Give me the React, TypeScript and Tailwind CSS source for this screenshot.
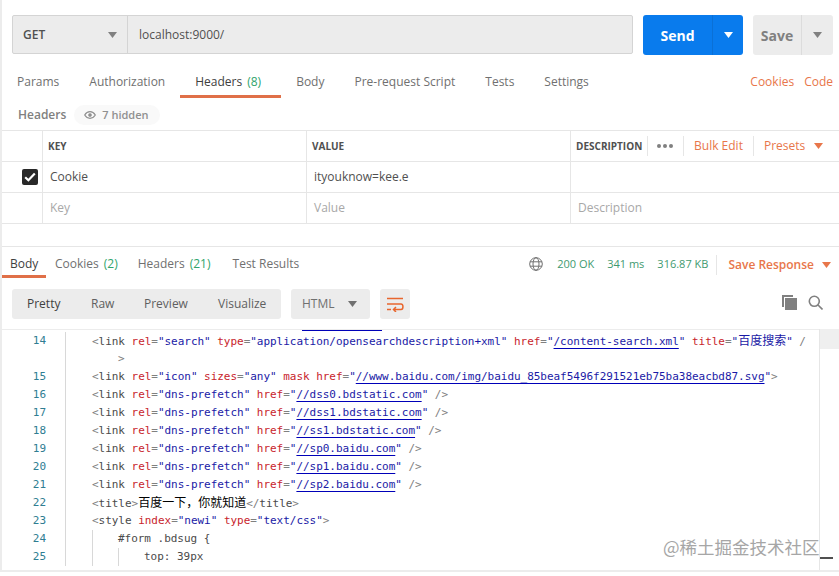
import React from 'react';

const ORANGE = 'text-[#e8764a]';

const Caret: React.FC<{ className?: string }> = ({ className }) => (
  <svg width="9" height="6" viewBox="0 0 9 6" className={className} fill="currentColor">
    <path d="M0 0h9L4.500 6z" />
  </svg>
);

const Tag: React.FC<{ children: React.ReactNode }> = ({ children }) => <span className="text-[#4a4a4a]">{children}</span>;
const Punct: React.FC<{ children: React.ReactNode }> = ({ children }) => <span className="text-[#808080]">{children}</span>;
const Attr: React.FC<{ children: React.ReactNode }> = ({ children }) => <span className="text-[#c8242c]">{children}</span>;
const Val: React.FC<{ children: React.ReactNode }> = ({ children }) => <span className="text-[#1a1aa6]">{children}</span>;
const Url: React.FC<{ children: React.ReactNode }> = ({ children }) => (
  <span className="text-[#1a1aa6] underline decoration-[#0000b8] underline-offset-[3px]">{children}</span>
);
const Cjk: React.FC<{ children: React.ReactNode; className?: string }> = ({ children, className }) => (
  <span className={`text-[12px] tracking-normal ${className ?? ''}`}>{children}</span>
);

const Guide = () => <span className="inline-block w-[26px] h-[18px] shrink-0 border-l border-[#d8d8d8]" />;

const DnsLine: React.FC<{ host: string }> = ({ host }) => (
  <>
    <Punct>&lt;</Punct><Tag>link</Tag> <Attr>rel</Attr><Punct>=</Punct><Val>"dns-prefetch"</Val> <Attr>href</Attr><Punct>=</Punct><Val>"</Val>
    <Url>{host}</Url><Val>"</Val> <Punct>/&gt;</Punct>
  </>
);

const CodeLine: React.FC<{ n?: number; guides?: number; children: React.ReactNode; pad?: string }> = ({ n, guides = 0, children, pad }) => (
  <div className="flex h-[18px] leading-[18px]">
    <div className="w-[45px] shrink-0 text-right text-[#2f7d92] pr-[1px]">{n}</div>
    <div className="w-[19px] shrink-0 border-r border-[#d8d8d8] mr-[26px]" />
    {Array.from({ length: guides }).map((_, i) => (
      <Guide key={i} />
    ))}
    <div className={`whitespace-pre ${pad ?? ''}`}>{children}</div>
  </div>
);

const App: React.FC = () => {
  const requestTabs = [
    { label: 'Params' },
    { label: 'Authorization' },
    { label: 'Headers', count: '(8)', active: true },
    { label: 'Body' },
    { label: 'Pre-request Script' },
    { label: 'Tests' },
    { label: 'Settings' },
  ];

  return (
    <div className="w-[839px] h-[576px] bg-white overflow-hidden relative font-['Open_Sans',sans-serif] text-[12px] text-[#505050]">
      <div className="h-[572px] border-l-2 border-b-2 border-[#ececec] flex flex-col">
        {/* url bar */}
        <div className="flex pt-[15px] pl-[10px] pr-[6px] h-[39px] box-content">
          <div className="flex h-[39px] w-[621px] bg-[#ececec] border border-[#d4d4d4] rounded-[2px]">
            <div className="w-[115px] flex items-center justify-between pl-[10px] pr-[10px] pt-[1px] border-r border-[#d4d4d4] font-semibold text-[#505050]">
              GET
              <Caret className="text-[#808080]" />
            </div>
            <div className="pl-[11px] flex items-center text-[#505050]">localhost:9000/</div>
          </div>
          <div className="ml-[10px] w-[100px] h-[40px] flex rounded-[3px] bg-[#097bed] text-white">
            <div className="w-[70px] flex items-center justify-center font-bold text-[14px] border-r border-[#0a70d6]">Send</div>
            <div className="flex-1 flex items-center justify-center"><Caret /></div>
          </div>
          <div className="ml-[10px] w-[80px] h-[40px] flex rounded-[3px] bg-[#ececec] text-[#808080]">
            <div className="w-[49px] flex items-center justify-center font-bold text-[14px] border-r border-[#dcdcdc]">Save</div>
            <div className="flex-1 flex items-center justify-center"><Caret /></div>
          </div>
        </div>

        {/* request tabs */}
        <div className="flex mt-[16px] h-[28px] pr-[6px]">
          {requestTabs.map((t) => (
            <div
              key={t.label}
              className={`pl-[15px] h-[28px] pt-[3px] border-b-[3px] ${t.active ? 'pr-[20px] border-[#e07048] text-[#404040]' : 'pr-[15px] border-transparent text-[#707070]'}`}
            >
              {t.label}
              {t.count && <span className="text-[#30a46c] ml-[5px]">{t.count}</span>}
            </div>
          ))}
          <div className={`ml-auto pt-[3px] flex gap-[10px] ${ORANGE}`}>
            <span>Cookies</span>
            <span>Code</span>
          </div>
        </div>

        {/* hidden headers */}
        <div className="flex items-center h-[20px] mt-[7px] pl-[16px] mb-[5px]">
          <span className="font-semibold text-[#808080]">Headers</span>
          <div className="ml-[8px] h-[20px] pl-[10px] pr-[11px] rounded-full bg-[#f9f9f9] flex items-center gap-[6px] text-[#909090] font-semibold text-[11px]">
            <svg width="12" height="8" viewBox="0 0 12 8" fill="none" stroke="#909090" strokeWidth="1.200">
              <path d="M.7 4C2 1.800 3.900.7 6 .7S10 1.800 11.300 4C10 6.200 8.100 7.300 6 7.300S2 6.200.7 4z" />
              <circle cx="6" cy="4" r="1.200" fill="#909090" />
            </svg>
            7 hidden
          </div>
        </div>

        {/* headers table */}
        <div className="border-t border-[#e6e6e6]">
          <div className="flex h-[31px] border-b border-[#e6e6e6] text-[10px] font-bold text-[#505050]">
            <div className="w-[41px] border-r border-[#e6e6e6]" />
            <div className="w-[264px] border-r border-[#e6e6e6] flex items-center pl-[5px]">KEY</div>
            <div className="w-[264px] border-r border-[#e6e6e6] flex items-center pl-[5px]">VALUE</div>
            <div className="flex-1 flex items-center pl-[5px]">
              <span className="w-[71px]">DESCRIPTION</span>
              <div className="w-[36px] h-[20px] border-l border-[#e6e6e6] flex items-center justify-center gap-[2px] pr-[2px] pb-[1px]">
                <i className="w-[4px] h-[4px] rounded-full bg-[#808080]" />
                <i className="w-[4px] h-[4px] rounded-full bg-[#808080]" />
                <i className="w-[4px] h-[4px] rounded-full bg-[#808080]" />
              </div>
              <div className={`w-[70px] h-[20px] border-l border-[#e6e6e6] flex items-center justify-center text-[12px] font-normal ${ORANGE}`}>Bulk Edit</div>
              <div className={`h-[20px] border-l border-[#e6e6e6] flex items-center pl-[10px] gap-[9px] text-[12px] font-normal ${ORANGE}`}>
                Presets
                <Caret />
              </div>
            </div>
          </div>
          <div className="flex h-[31px] border-b border-[#e6e6e6]">
            <div className="w-[41px] border-r border-[#e6e6e6] flex items-center pl-[20px]">
              <div className="w-[16px] h-[16px] rounded-[2px] bg-[#282828] flex items-center justify-center">
                <svg width="12" height="10" viewBox="0 0 12 10" fill="none" stroke="#fff" strokeWidth="2.200">
                  <path d="M1.200 5.200 4.400 8.300 10.800 1.500" />
                </svg>
              </div>
            </div>
            <div className="w-[264px] border-r border-[#e6e6e6] flex items-center pl-[7px]">Cookie</div>
            <div className="w-[264px] border-r border-[#e6e6e6] flex items-center pl-[7px]">ityouknow=kee.e</div>
            <div className="flex-1" />
          </div>
          <div className="flex h-[31px] border-b border-[#e6e6e6] text-[#a8a8a8]">
            <div className="w-[41px] border-r border-[#e6e6e6]" />
            <div className="w-[264px] border-r border-[#e6e6e6] flex items-center pl-[7px]">Key</div>
            <div className="w-[264px] border-r border-[#e6e6e6] flex items-center pl-[7px]">Value</div>
            <div className="flex-1 flex items-center pl-[7px]">Description</div>
          </div>
        </div>

        {/* response tabs */}
        <div className="mt-[22px] border-t border-[#e6e6e6] h-[32px] flex pr-[8px]">
          <div className="w-[44px] h-[31px] border-b-[3px] border-[#e07048] pl-[8px] pt-[8px] text-[#404040]">Body</div>
          <div className="ml-[9px] pt-[8px] text-[#707070]">Cookies<span className="text-[#30a46c] ml-[5px]">(2)</span></div>
          <div className="ml-[20px] pt-[8px] text-[#707070]">Headers<span className="text-[#30a46c] ml-[5px]">(21)</span></div>
          <div className="ml-[22px] pt-[8px] text-[#707070]">Test Results</div>
          <div className="ml-auto flex items-start pt-[8px] text-[11px] text-[#3f9a70]">
            <svg width="14" height="14" viewBox="0 0 14 14" fill="none" stroke="#707070" strokeWidth="1" className="mt-[2px] mr-[14px]">
              <circle cx="7" cy="7" r="6.300" />
              <ellipse cx="7" cy="7" rx="3" ry="6.300" />
              <path d="M1 4.800h12M1 9.200h12" />
            </svg>
            <span className="mr-[13px] leading-[18px]">200 OK</span>
            <span className="mr-[13px] leading-[18px]">341 ms</span>
            <span className="mr-[8px] leading-[18px]">316.87 KB</span>
            <div className="h-[20px] border-l border-[#e6e6e6] pl-[11px] text-[12px] font-semibold text-[#e8764a] flex items-center gap-[8px]">
              Save Response
              <Caret />
            </div>
          </div>
        </div>

        {/* response toolbar */}
        <div className="flex items-start mt-[11px] pl-[10px] pr-[16px] h-[30px]">
          <div className="w-[269px] h-[30px] bg-[#ececec] rounded-[3px] flex items-center text-[#606060] pl-[15px]">
            <span className="w-[64px] text-[#404040]">Pretty</span>
            <span className="w-[53px]">Raw</span>
            <span className="w-[74px]">Preview</span>
            <span>Visualize</span>
          </div>
          <div className="ml-[10px] w-[79px] h-[30px] bg-[#ececec] rounded-[3px] flex items-center pl-[11px] text-[#707070]">
            <span className="w-[46px]">HTML</span>
            <Caret className="text-[#707070]" />
          </div>
          <div className="ml-[10px] w-[30px] h-[30px] bg-[#ececec] rounded-[3px] flex items-center justify-center">
            <svg width="18" height="15" viewBox="0 0 18 15" fill="none" stroke="#e8662e" strokeWidth="1.500">
              <path d="M1 1.500h16M1 7h14c2.600 0 2.600 5.500 0 5.500H8M1 12.500h4M10 10l-2.500 2.500L10 15" />
            </svg>
          </div>
          <div className="ml-auto flex items-center gap-[11px] h-[26px]">
            <svg width="15" height="15" viewBox="0 0 15 15" fill="#808080">
              <path d="M0 0h11v2H2v10H0z" />
              <path d="M3 3h12v12H3z" />
            </svg>
            <svg width="15" height="15" viewBox="0 0 15 15" fill="none" stroke="#808080" strokeWidth="1.600">
              <circle cx="6.300" cy="6.300" r="5" />
              <path d="m10 10 4.500 4.500" />
            </svg>
          </div>
        </div>

        {/* code */}
        <div className="mt-[10px] flex-1 flex font-['DejaVu_Sans_Mono','Noto_Sans_CJK_SC',monospace] text-[11px] tracking-[-0.03px] overflow-hidden">
          <div className="w-[817px] border-t border-[#ececec] overflow-hidden">
            <div className="ml-[300px] w-[80px] h-[1px] bg-[#0000b8]" />
            <div className="mt-[1px]">
              <CodeLine n={14}>
                <Punct>&lt;</Punct><Tag>link</Tag> <Attr>rel</Attr><Punct>=</Punct><Val>"search"</Val> <Attr>type</Attr><Punct>=</Punct><Val>"application/opensearchdescription+xml"</Val> <Attr>href</Attr><Punct>=</Punct><Val>"</Val>
                <Url>/content-search.xml</Url><Val>"</Val> <Attr>title</Attr><Punct>=</Punct><Val>"<Cjk>百度搜索</Cjk>"</Val> <Punct>/</Punct>
              </CodeLine>
              <CodeLine pad="pl-[26px]"><Punct>&gt;</Punct></CodeLine>
              <CodeLine n={15}>
                <Punct>&lt;</Punct><Tag>link</Tag> <Attr>rel</Attr><Punct>=</Punct><Val>"icon"</Val> <Attr>sizes</Attr><Punct>=</Punct><Val>"any"</Val> <Attr>mask</Attr> <Attr>href</Attr><Punct>=</Punct><Val>"</Val>
                <Url>//www.baidu.com/img/baidu_85beaf5496f291521eb75ba38eacbd87.svg</Url><Val>"</Val><Punct>&gt;</Punct>
              </CodeLine>
              <CodeLine n={16}><DnsLine host="//dss0.bdstatic.com" /></CodeLine>
              <CodeLine n={17}><DnsLine host="//dss1.bdstatic.com" /></CodeLine>
              <CodeLine n={18}><DnsLine host="//ss1.bdstatic.com" /></CodeLine>
              <CodeLine n={19}><DnsLine host="//sp0.baidu.com" /></CodeLine>
              <CodeLine n={20}><DnsLine host="//sp1.baidu.com" /></CodeLine>
              <CodeLine n={21}><DnsLine host="//sp2.baidu.com" /></CodeLine>
              <CodeLine n={22}>
                <Punct>&lt;</Punct><Tag>title</Tag><Punct>&gt;</Punct><Cjk className="text-black">百度一下，你就知道</Cjk><Punct>&lt;/</Punct><Tag>title</Tag><Punct>&gt;</Punct>
              </CodeLine>
              <CodeLine n={23}>
                <Punct>&lt;</Punct><Tag>style</Tag> <Attr>index</Attr><Punct>=</Punct><Val>"newi"</Val> <Attr>type</Attr><Punct>=</Punct><Val>"text/css"</Val><Punct>&gt;</Punct>
              </CodeLine>
              <CodeLine n={24} guides={1}><Tag>#form .bdsug {'{'}</Tag></CodeLine>
              <CodeLine n={25} guides={2}><Tag>top: 39px</Tag></CodeLine>
            </div>
          </div>
          <div className="w-[20px] border-l border-[#e6e6e6]">
            <div className="h-[20px] bg-[#efefef]" />
          </div>
        </div>
      </div>

      {/* watermark */}
      <div className="absolute left-[663px] top-[535px] text-[17.500px] leading-[24px] text-[#a6a6a6] font-['Noto_Sans_CJK_SC',sans-serif] whitespace-nowrap">@稀土掘金技术社区</div>
      <div className="absolute left-[820px] top-[557px] w-[13px] h-[2px] bg-[#505050]" />
    </div>
  );
};

export default App;
